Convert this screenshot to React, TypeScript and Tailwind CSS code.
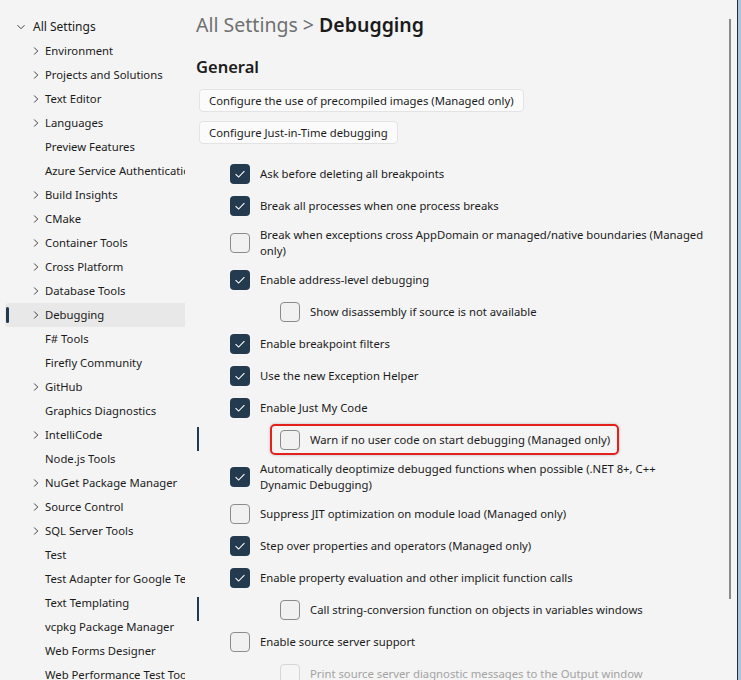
import React from "react";

type NavItem = { label: string; arrow?: boolean; selected?: boolean };

const navItems: NavItem[] = [
	{ label: "Environment", arrow: true },
	{ label: "Projects and Solutions", arrow: true },
	{ label: "Text Editor", arrow: true },
	{ label: "Languages", arrow: true },
	{ label: "Preview Features" },
	{ label: "Azure Service Authentication" },
	{ label: "Build Insights", arrow: true },
	{ label: "CMake", arrow: true },
	{ label: "Container Tools", arrow: true },
	{ label: "Cross Platform", arrow: true },
	{ label: "Database Tools", arrow: true },
	{ label: "Debugging", arrow: true, selected: true },
	{ label: "F# Tools" },
	{ label: "Firefly Community" },
	{ label: "GitHub", arrow: true },
	{ label: "Graphics Diagnostics" },
	{ label: "IntelliCode", arrow: true },
	{ label: "Node.js Tools" },
	{ label: "NuGet Package Manager", arrow: true },
	{ label: "Source Control", arrow: true },
	{ label: "SQL Server Tools", arrow: true },
	{ label: "Test" },
	{ label: "Test Adapter for Google Test" },
	{ label: "Text Templating" },
	{ label: "vcpkg Package Manager" },
	{ label: "Web Forms Designer" },
	{ label: "Web Performance Test Tools" },
];

type Option = {
	label: React.ReactNode;
	checked?: boolean;
	indent?: boolean;
	twoLine?: boolean;
	disabled?: boolean;
	highlight?: boolean;
};

const options: Option[] = [
	{ label: "Ask before deleting all breakpoints", checked: true },
	{ label: "Break all processes when one process breaks", checked: true },
	{
		label: (
			<>
				Break when exceptions cross AppDomain or managed/native boundaries (Managed
				<br />
				only)
			</>
		),
		twoLine: true,
	},
	{ label: "Enable address-level debugging", checked: true },
	{ label: "Show disassembly if source is not available", indent: true },
	{ label: "Enable breakpoint filters", checked: true },
	{ label: "Use the new Exception Helper", checked: true },
	{ label: "Enable Just My Code", checked: true },
	{ label: "Warn if no user code on start debugging (Managed only)", indent: true, highlight: true },
	{
		label: (
			<>
				Automatically deoptimize debugged functions when possible (.NET 8+, C++
				<br />
				Dynamic Debugging)
			</>
		),
		checked: true,
		twoLine: true,
	},
	{ label: "Suppress JIT optimization on module load (Managed only)" },
	{ label: "Step over properties and operators (Managed only)", checked: true },
	{ label: "Enable property evaluation and other implicit function calls", checked: true },
	{ label: "Call string-conversion function on objects in variables windows", indent: true },
	{ label: "Enable source server support" },
	{ label: "Print source server diagnostic messages to the Output window", indent: true, disabled: true },
];

const Chevron = ({ down }: { down?: boolean }) => (
	<svg width="10" height="10" viewBox="0 0 10 10" className="text-[#404040]">
		{down ? (
			<path d="M1.5 3.2 L5 6.7 L8.5 3.2" fill="none" stroke="currentColor" strokeWidth="1" />
		) : (
			<path d="M3.2 1.5 L6.7 5 L3.2 8.5" fill="none" stroke="currentColor" strokeWidth="1" />
		)}
	</svg>
);

const CheckBox = ({ checked, disabled }: { checked?: boolean; disabled?: boolean }) => {
	if (checked) {
		return (
			<div className="w-5 h-5 shrink-0 rounded-[4px] bg-[#233a4f] flex items-center justify-center">
				<svg width="20" height="20" viewBox="0 0 20 20">
					<path d="M5.6 10.2 L8.6 13.1 L14.4 7.2" fill="none" stroke="#ffffff" strokeWidth="1.1" />
				</svg>
			</div>
		);
	}
	return (
		<div
			className={
				disabled
					? "w-5 h-5 shrink-0 rounded-[4px] border border-[#d6d6d6] bg-[#f5f5f5]"
					: "w-5 h-5 shrink-0 rounded-[4px] border border-[#8b8b8b] bg-[#f1f1f1]"
			}
		/>
	);
};

const OptionRow = ({ opt }: { opt: Option }) => (
	<div
		className={`flex ${opt.indent ? "pl-[50px]" : ""} ${opt.twoLine ? "-my-px" : ""}`}
	>
		<div className="relative flex items-center gap-[10px]">
			{opt.highlight && (
				<div className="absolute -left-[10px] -right-[9px] -top-[6px] -bottom-[5px] rounded-[5px] border-2 border-[#e3201b] shadow-[0_0_3px_rgba(0,0,0,0.25)]" />
			)}
			<CheckBox checked={opt.checked} disabled={opt.disabled} />
			<p className={`leading-4 ${opt.disabled ? "text-[#a3a3a3]" : "text-[#1b1b1b]"}`}>{opt.label}</p>
		</div>
	</div>
);

const App = () => {
	return (
		<div
			className="w-[741px] h-[680px] flex overflow-hidden bg-[#f4f4f4] text-[11.3px] text-[#1b1b1b]"
			style={{ fontFamily: '"Segoe UI", "Noto Sans", "Open Sans", sans-serif' }}
		>
			{/* tree */}
			<div className="w-[185px] shrink-0 overflow-hidden whitespace-nowrap pt-[15px]">
				<div className="h-6 flex items-center pl-[16px] gap-[7px] text-[12px]">
					<Chevron down />
					<span>All Settings</span>
				</div>
				{navItems.map((item) => (
					<div
						key={item.label}
						className={`relative h-6 flex items-center ml-[5px] pl-[26px] gap-[4px] rounded-l-[4px] ${
							item.selected ? "bg-[#e8e8e8]" : ""
						}`}
					>
						{item.selected && (
							<div className="absolute left-[1px] top-[4px] w-[3px] h-4 rounded-full bg-[#1f3a51]" />
						)}
						<div className="w-[10px] shrink-0">{item.arrow && <Chevron />}</div>
						<span>{item.label}</span>
					</div>
				))}
			</div>

			{/* page */}
			<div className="relative flex-1 pl-[11px] pt-[11px]">
				<div className="absolute left-[12px] top-[427px] w-[2px] h-6 bg-[#1f3a51]" />
				<div className="absolute left-[12px] top-[597px] w-[2px] h-6 bg-[#1f3a51]" />
				<div className="absolute right-[6px] top-[19px] w-[2px] h-[580px] bg-[#8a8a8a]" />

				<h1 className="text-[19.5px] leading-7 whitespace-nowrap">
					<span className="text-[#707070]">All Settings &gt; </span>
					<span className="font-semibold text-[#1b1b1b]">Debugging</span>
				</h1>
				<h2 className="mt-[16px] text-[16.5px] leading-6 font-semibold">General</h2>

				<div className="mt-[10px] pl-[3px] flex flex-col items-start gap-[9px]">
					<button className="h-[23px] px-[9px] rounded-[4px] border border-[#e3e3e3] bg-[#fbfbfb] leading-4">
						Configure the use of precompiled images (Managed only)
					</button>
					<button className="h-[23px] px-[9px] rounded-[4px] border border-[#e3e3e3] bg-[#fbfbfb] leading-4">
						Configure Just-in-Time debugging
					</button>
				</div>

				<div className="mt-[20px] pl-[34px] flex flex-col gap-3 whitespace-nowrap">
					{options.map((opt, i) => (
						<OptionRow key={i} opt={opt} />
					))}
				</div>
			</div>

			{/* window edge */}
			<div className="w-px shrink-0 bg-[#2b2b2b]" />
			<div className="w-[3px] shrink-0 bg-[#a7c7e0]" />
		</div>
	);
};

export default App;
